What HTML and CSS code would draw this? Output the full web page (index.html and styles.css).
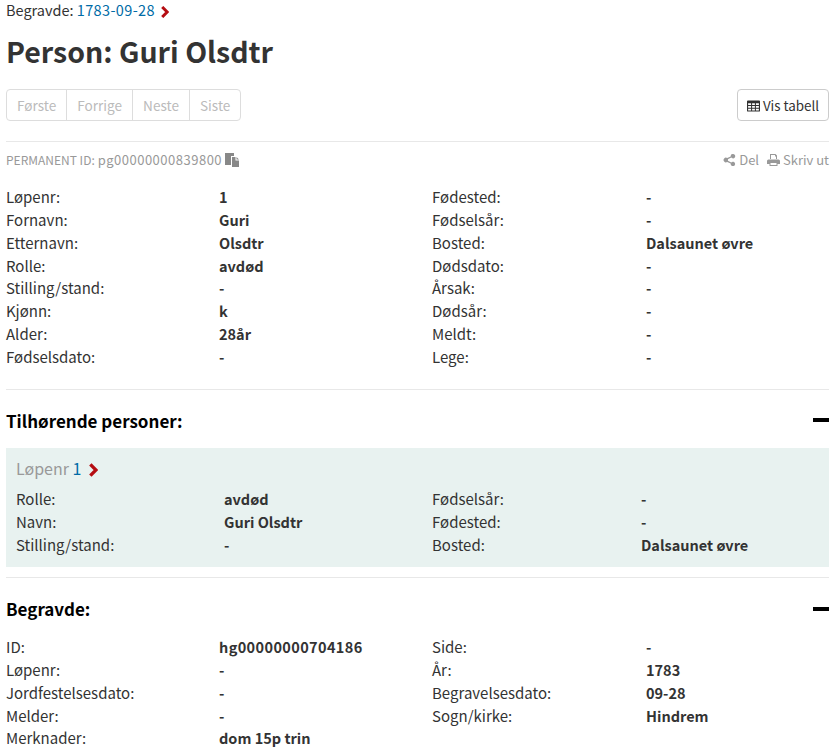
FILE: index.html
```html
<!DOCTYPE html>
<html lang="en">
<head>
    <meta charset="UTF-8">
    <title>Person: Guri Olsdtr</title>
    <link rel="stylesheet" href="styles.css">
</head>
<body>
    <div class="crumb">
        Begravde: <a class="digits" href="#">1783-09-28</a>
        <svg class="chevron" viewBox="0 0 8 12"><path d="M1.200 1 6.200 6l-5 5" /></svg>
    </div>

    <h1>Person: Guri Olsdtr</h1>

    <div class="toolbar">
        <div class="pager">
            <span>Første</span>
            <span>Forrige</span>
            <span>Neste</span>
            <span>Siste</span>
        </div>
        <button class="table-btn">
            <svg class="icon" viewBox="0 0 14 12"><path d="M1 0h12a1 1 0 0 1 1 1v10a1 1 0 0 1-1 1H1a1 1 0 0 1-1-1V1a1 1 0 0 1 1-1Zm.2 3v2h3.2V3Zm4.3 0v2h3V3Zm4.1 0v2h3.2V3ZM1.2 6v2h3.2V6Zm4.3 0v2h3V6Zm4.1 0v2h3.2V6ZM1.2 9v1.8h3.2V9Zm4.3 0v1.8h3V9Zm4.1 0v1.8h3.2V9Z" fill-rule="evenodd" /></svg>
            Vis tabell
        </button>
    </div>

    <div class="meta">
        <div class="perm">
            <span class="perm-label">PERMANENT ID:</span> <span class="perm-id">pg00000000839800</span>
            <svg class="icon copy" viewBox="0 0 14 14"><path d="M0 0h9v3H6v9H0Z" /><path d="M7 4h3.500v3.500H14V14H7Z" /><path d="M11.500 4 14 6.500h-2.500Z" /></svg>
        </div>
        <div class="actions">
            <span><svg class="icon" viewBox="0 0 12 12"><path d="M9.500 0a2.200 2.200 0 1 1-1.700 3.600L4.400 5.300a2 2 0 0 1 0 1.400l3.400 1.700a2.200 2.200 0 1 1-.6 1.200L3.700 7.900a2.300 2.300 0 1 1 0-3.800l3.500-1.700A2.200 2.200 0 0 1 9.500 0Z" /></svg> Del</span>
            <span><svg class="icon" viewBox="0 0 13 12"><path d="M3 0h5.500L10 1.500V5H9V2.500H8V1H4v4H3ZM1.500 5.500h10A1.500 1.500 0 0 1 13 7v3h-2.500v2h-8v-2H0V7a1.500 1.500 0 0 1 1.500-1.500ZM3.500 9v2h6V9Z" fill-rule="evenodd" /></svg> Skriv ut</span>
        </div>
    </div>

    <div class="fields">
        <span>Løpenr:</span><b>1</b><span>Fødested:</span><b>-</b>
        <span>Fornavn:</span><b>Guri</b><span>Fødselsår:</span><b>-</b>
        <span>Etternavn:</span><b>Olsdtr</b><span>Bosted:</span><b>Dalsaunet øvre</b>
        <span>Rolle:</span><b>avdød</b><span>Dødsdato:</span><b>-</b>
        <span>Stilling/stand:</span><b>-</b><span>Årsak:</span><b>-</b>
        <span>Kjønn:</span><b>k</b><span>Dødsår:</span><b>-</b>
        <span>Alder:</span><b>28år</b><span>Meldt:</span><b>-</b>
        <span>Fødselsdato:</span><b>-</b><span>Lege:</span><b>-</b>
    </div>

    <div class="section-head">
        <h2>Tilhørende personer:</h2>
        <div class="collapse"></div>
    </div>

    <div class="card">
        <div class="card-title">
            Løpenr <a href="#">1</a>
            <svg class="chevron big" viewBox="0 0 8 12"><path d="M1.200 1 6.200 6l-5 5" /></svg>
        </div>
        <div class="fields inner">
            <span>Rolle:</span><b>avdød</b><span>Fødselsår:</span><b>-</b>
            <span>Navn:</span><b>Guri Olsdtr</b><span>Fødested:</span><b>-</b>
            <span>Stilling/stand:</span><b>-</b><span>Bosted:</span><b>Dalsaunet øvre</b>
        </div>
    </div>

    <div class="section-head after-card">
        <h2>Begravde:</h2>
        <div class="collapse"></div>
    </div>

    <div class="fields last">
        <span>ID:</span><b class="digits">hg00000000704186</b><span>Side:</span><b>-</b>
        <span>Løpenr:</span><b>-</b><span>År:</span><b>1783</b>
        <span>Jordfestelsesdato:</span><b>-</b><span>Begravelsesdato:</span><b>09-28</b>
        <span>Melder:</span><b>-</b><span>Sogn/kirke:</span><b>Hindrem</b>
        <span>Merknader:</span><b>dom 15p trin</b>
    </div>
</body>
</html>
```

FILE: styles.css
```css
html {
    overflow: hidden;
}

body {
    font-family: "Noto Sans CJK SC", "Noto Sans", sans-serif;
    font-size: 14.5px;
    line-height: 22.86px;
    color: #333;
    background: #fff;
    margin: 0;
    padding: 0 7px 0 6px;
}

a {
    color: #006ba6;
    text-decoration: none;
}

.digits {
    letter-spacing: 0.37px;
}

.crumb {
    height: 19px;
    line-height: 19px;
}

.chevron {
    width: 8px;
    height: 12px;
    margin-left: 3px;
    vertical-align: -2px;
    fill: none;
    stroke: #b50d12;
    stroke-width: 3;
}

.chevron.big {
    width: 9px;
    height: 14px;
    margin-left: 4px;
}

h1 {
    font-size: 28.5px;
    line-height: 38px;
    font-weight: 700;
    margin: 13px 0 19px;
}

.toolbar {
    display: flex;
    justify-content: space-between;
    padding-bottom: 20px;
    border-bottom: 1px solid #e8e8e8;
}

.pager {
    display: flex;
    height: 32px;
    border: 1px solid #ddd;
    border-radius: 4px;
    box-sizing: border-box;
    color: #bbb;
    font-size: 13.6px;
    line-height: 30px;
}

.pager span {
    padding: 0 10px;
    border-left: 1px solid #ddd;
}

.pager span:first-child {
    border-left: none;
}

.table-btn {
    height: 32px;
    width: 92px;
    padding: 0;
    background: #fff;
    border: 1px solid #ccc;
    border-radius: 4px;
    font: inherit;
    font-size: 13.4px;
    color: #333;
}

.icon {
    width: 13px;
    height: 12px;
    fill: currentColor;
    vertical-align: -1px;
}

.meta {
    display: flex;
    justify-content: space-between;
    margin-top: 6px;
    color: #999;
    font-size: 13px;
    line-height: 23px;
}

.perm-label {
    font-size: 12px;
}

.perm-id {
    letter-spacing: 0.5px;
}

.copy {
    width: 14px;
    height: 14px;
    vertical-align: -2px;
    color: #888;
}

.actions {
    display: flex;
    gap: 8px;
}

.fields {
    display: grid;
    grid-template-columns: 213px 213px 214px 1fr;
    align-items: baseline;
    margin-top: 15px;
}

.fields span {
    font-size: 15px;
}

.fields b {
    font-weight: 700;
}

.fields.last {
    margin-top: 15.5px;
}

.section-head {
    display: flex;
    justify-content: space-between;
    align-items: center;
    margin-top: 20px;
    padding-top: 19px;
    border-top: 1px solid #e8e8e8;
}

.section-head.after-card {
    margin-top: 10px;
}

h2 {
    font-size: 17px;
    line-height: 23px;
    font-weight: 700;
    color: #000;
    margin: 0;
}

.collapse {
    width: 16px;
    height: 4px;
    background: #000;
}

.card {
    background: #e8f2f0;
    margin-top: 16px;
    padding: 9px 10px 11px;
}

.card-title {
    font-size: 16px;
    line-height: 23px;
    color: #999;
}

.fields.inner {
    grid-template-columns: 208px 208px 209px 1fr;
    margin-top: 8px;
}
```
